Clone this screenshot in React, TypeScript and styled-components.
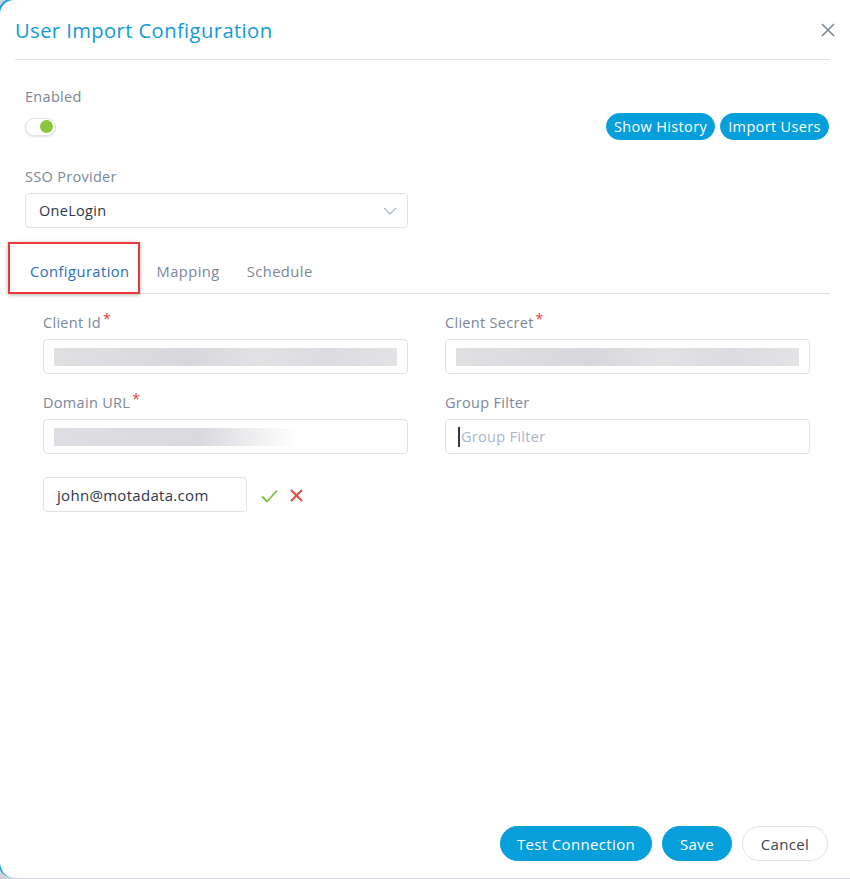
import React from "react";
import styled, {createGlobalStyle} from "styled-components";

const GlobalStyle = createGlobalStyle`
  html, body {
    margin: 0;
    padding: 0;
    background: #cfd2d6;
  }

  body {
    font-family: "Open Sans", "Noto Sans", sans-serif;
    letter-spacing: 0.3px;
    overflow: hidden;
  }

  * {
    box-sizing: border-box;
  }
`;

const Viewport = styled.div`
  width: 850px;
  height: 879px;
  overflow: hidden;
`;

const Frame = styled.div`
  margin: -2px 0 0 -2px;
  width: 854px;
  height: 880px;
  background: #fff;
  border: 2px solid #0a9fdc;
  border-bottom: 0;
  border-right: 0;
  border-radius: 16px 0 0 16px;
  display: flex;
  flex-direction: column;
`;

const Header = styled.div`
  height: 59px;
  padding: 0 16px 0 15px;
  display: flex;
  align-items: center;
  justify-content: space-between;
`;

const Title = styled.h1`
  margin: 0;
  font-size: 20.2px;
  font-weight: 500;
  color: #119bd6;
  letter-spacing: 0.4px;
`;

const CloseButton = styled.button`
  border: 0;
  background: none;
  padding: 0;
  width: 16px;
  height: 16px;
  display: flex;
  cursor: pointer;
`;

const Divider = styled.div`
  height: 1px;
  margin: 0 22px 0 15px;
  background: #dde1e8;
`;

const Body = styled.div`
  padding: 0 22px 0 25px;
  flex: 1;
`;

const Label = styled.div<{ $top?: number }>`
  margin-top: ${p => p.$top ?? 0}px;
  font-size: 14.5px;
  line-height: 20px;
  color: #7c879a;
`;

const Required = styled.span`
  color: #e53e3e;
  font-size: 14px;
  vertical-align: 4px;
  margin-left: 2px;
  line-height: 0;
`;

const ToolbarRow = styled.div`
  margin-top: 6px;
  height: 27px;
  display: flex;
  align-items: center;
  justify-content: space-between;
  padding-right: 1px;
`;

const Toggle = styled.div`
  width: 31px;
  height: 18px;
  border: 1px solid #dfe3ea;
  border-radius: 9px;
  background: #fff;
  box-shadow: 0 1px 2px rgba(0, 0, 0, 0.12);
  position: relative;

  &::after {
    content: "";
    position: absolute;
    right: 2px;
    top: 1.5px;
    width: 13px;
    height: 13px;
    border-radius: 50%;
    background: #8cc63f;
  }
`;

const ButtonGroup = styled.div<{ $gap: number }>`
  display: flex;
  gap: ${p => p.$gap}px;
`;

const PillButton = styled.button<{ $small?: boolean; $ghost?: boolean; $width: number }>`
  font-family: inherit;
  letter-spacing: 0.35px;
  height: ${p => (p.$small ? 27 : 35)}px;
  width: ${p => p.$width}px;
  padding: 0;
  border-radius: 18px;
  font-size: ${p => (p.$small ? 14.5 : 15)}px;
  font-weight: 500;
  cursor: pointer;
  border: 1px solid ${p => (p.$ghost ? "#dde2ea" : "#069fdc")};
  background: ${p => (p.$ghost ? "#fff" : "#069fdc")};
  color: ${p => (p.$ghost ? "#3b4253" : "#fff")};
`;

const Select = styled.div`
  margin-top: 6px;
  width: 383px;
  height: 35px;
  border: 1px solid #dde2ea;
  border-radius: 4px;
  padding: 0 10px 0 13px;
  display: flex;
  align-items: center;
  justify-content: space-between;
  font-size: 14.5px;
  color: #2f3747;
`;

const TabBar = styled.div`
  margin-top: 20px;
  height: 46px;
  border-bottom: 1px solid #dde1e8;
  display: flex;
  gap: 27px;
  padding-left: 5px;
`;

const Tab = styled.div<{ $active?: boolean }>`
  position: relative;
  padding-top: 13px;
  font-size: 14.7px;
  letter-spacing: 0.45px;
  line-height: 20px;
  color: ${p => (p.$active ? "#2e6cbe" : "#7c879a")};
  font-weight: ${p => (p.$active ? 500 : 400)};
`;

const Highlight = styled.div`
  position: absolute;
  left: -22px;
  right: -10px;
  top: -6px;
  bottom: -1px;
  border: 2px solid #e8383d;
  box-shadow: 0 1px 4px rgba(0, 0, 0, 0.3);
  pointer-events: none;
`;

const FormGrid = styled.div`
  padding: 0 0 0 18px;
  display: grid;
  grid-template-columns: 365px 365px;
  column-gap: 37px;
`;

const Field = styled.div<{ $top: number }>`
  margin-top: ${p => p.$top}px;
`;

const InputBox = styled.div<{ $width?: number; $top?: number }>`
  margin-top: ${p => p.$top ?? 6}px;
  width: ${p => (p.$width ? `${p.$width}px` : "100%")};
  height: 35px;
  border: 1px solid #dde2ea;
  border-radius: 4px;
  padding: 0 10px;
  display: flex;
  align-items: center;
  font-size: 15px;
  color: #2f3747;
`;

const Blur = styled.div<{ $fade?: boolean }>`
  height: 18px;
  width: ${p => (p.$fade ? "242px" : "100%")};
  background: ${p =>
    p.$fade
      ? "linear-gradient(90deg, #dedee2 0%, #d9d9de 60%, #fff 100%)"
      : "linear-gradient(90deg, #e0e0e3 0%, #d8d8dc 40%, #e2e2e5 60%, #dcdce0 80%, #e3e3e6 100%)"};
  filter: blur(0.6px);
`;

const Placeholder = styled.span`
  color: #a9b6cb;
  border-left: 2px solid #2d3a4e;
  padding-left: 1px;
  margin-left: 2px;
  line-height: 20px;
  font-size: 14.5px;
`;

const EmailText = styled.span`
  padding-left: 3px;
`;

const EmailRow = styled.div`
  margin-top: 23px;
  display: flex;
  align-items: center;
  gap: 14px;
`;

const Icons = styled.div`
  display: flex;
  align-items: center;
  gap: 12px;
  padding-top: 2px;
`;

const Footer = styled.div`
  padding: 0 24px 17px 0;
  display: flex;
  justify-content: flex-end;
`;

const Chevron = () => (
  <svg width="14" height="8" viewBox="0 0 14 8" fill="none">
    <path d="M1 1l6 6 6-6" stroke="#aab5c4" strokeWidth="1.2"/>
  </svg>
);

const CloseIcon = () => (
  <svg width="16" height="16" viewBox="0 0 16 16" fill="none">
    <path d="M2 2l12 12M14 2L2 14" stroke="#7d8a99" strokeWidth="1.6"/>
  </svg>
);

const CheckIcon = () => (
  <svg width="17" height="14" viewBox="0 0 17 14" fill="none">
    <path d="M1 7.5l5 5L16 1.5" stroke="#7cc142" strokeWidth="1.8"/>
  </svg>
);

const CrossIcon = () => (
  <svg width="13" height="13" viewBox="0 0 13 13" fill="none">
    <path d="M1 1l11 11M12 1L1 12" stroke="#e5473d" strokeWidth="1.9"/>
  </svg>
);

export default function App() {
  const tabs = ["Configuration", "Mapping", "Schedule"];

  return (
    <Viewport>
      <GlobalStyle/>
      <Frame>
        <Header>
          <Title>User Import Configuration</Title>
          <CloseButton aria-label="close">
            <CloseIcon/>
          </CloseButton>
        </Header>
        <Divider/>

        <Body>
          <Label $top={27}>Enabled</Label>
          <ToolbarRow>
            <Toggle/>
            <ButtonGroup $gap={5}>
              <PillButton $small $width={109}>Show History</PillButton>
              <PillButton $small $width={109}>Import Users</PillButton>
            </ButtonGroup>
          </ToolbarRow>

          <Label $top={27}>SSO Provider</Label>
          <Select>
            <span>OneLogin</span>
            <Chevron/>
          </Select>

          <TabBar>
            {tabs.map((t, i) => (
              <Tab key={t} $active={i === 0}>
                {t}
                {i === 0 && <Highlight/>}
              </Tab>
            ))}
          </TabBar>

          <FormGrid>
            <Field $top={19}>
              <Label>Client Id<Required>*</Required></Label>
              <InputBox><Blur/></InputBox>
            </Field>
            <Field $top={19}>
              <Label>Client Secret<Required>*</Required></Label>
              <InputBox><Blur/></InputBox>
            </Field>
            <Field $top={19}>
              <Label>Domain URL<Required>*</Required></Label>
              <InputBox><Blur $fade/></InputBox>
            </Field>
            <Field $top={19}>
              <Label>Group Filter</Label>
              <InputBox><Placeholder>Group Filter</Placeholder></InputBox>
            </Field>
          </FormGrid>

          <FormGrid>
            <EmailRow>
              <InputBox $width={204} $top={0}>
                <EmailText>john@motadata.com</EmailText>
              </InputBox>
              <Icons>
                <CheckIcon/>
                <CrossIcon/>
              </Icons>
            </EmailRow>
          </FormGrid>
        </Body>

        <Footer>
          <ButtonGroup $gap={10}>
            <PillButton $width={152}>Test Connection</PillButton>
            <PillButton $width={70}>Save</PillButton>
            <PillButton $ghost $width={86}>Cancel</PillButton>
          </ButtonGroup>
        </Footer>
      </Frame>
    </Viewport>
  );
}
